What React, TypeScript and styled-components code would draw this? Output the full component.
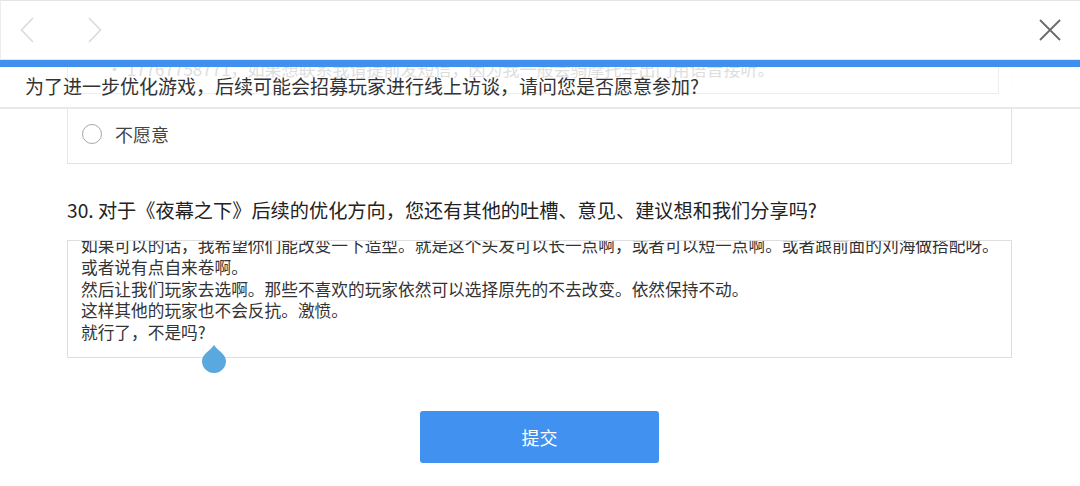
import styled, { createGlobalStyle } from "styled-components";

const GlobalStyle = createGlobalStyle`
  html, body {
    margin: 0;
    padding: 0;
    background: #fff;
  }
  body {
    font-family: "Noto Sans CJK SC", "Noto Sans", sans-serif;
    color: #333;
    width: 1080px;
    height: 486px;
    overflow: hidden;
  }
`;

const Page = styled.div`
  display: flex;
  flex-direction: column;
  width: 1080px;
`;

const TopBar = styled.div`
  display: flex;
  align-items: center;
  height: 58px;
  border-top: 1px solid #e4e4e4;
  border-left: 1px solid #ececec;
  border-bottom: 1px solid #e6e6e6;
  padding: 0 19px 0 19px;
  background: #fff;
`;

const NavButton = styled.button`
  display: flex;
  align-items: center;
  justify-content: center;
  width: 14px;
  height: 26px;
  padding: 0;
  margin-right: ${(p: { $gap?: number }) => p.$gap ?? 0}px;
  border: none;
  background: transparent;
`;

const CloseButton = styled.button`
  margin-left: auto;
  display: flex;
  padding: 0;
  border: none;
  background: transparent;
`;

const Progress = styled.div`
  height: 7px;
  background: #4290ee;
`;

const Sticky = styled.div`
  position: relative;
  height: 40px;
  overflow: hidden;
  border-bottom: 2px solid #e8e8e8;
`;

const Ghost = styled.div`
  margin: 0 68px 0 67px;
  height: 100%;
  border-right: 1px solid #f3f3f3;
  opacity: 0.16;
`;

const GhostInput = styled.div`
  margin-top: -13px;
  margin-right: 12px;
  height: 38px;
  border: 1px solid #999;
  padding-left: 38px;
  font-size: 17px;
  line-height: 28px;
  color: #333;
  white-space: nowrap;
`;

const StickyTitle = styled.div`
  position: absolute;
  left: 25px;
  top: 6px;
  font-size: 19px;
  line-height: 26px;
  color: #333;
  white-space: nowrap;
`;

const Body = styled.div`
  display: flex;
  flex-direction: column;
  padding: 0 68px 0 67px;
`;

const OptionBox = styled.div`
  display: flex;
  align-items: center;
  gap: 13px;
  height: 51px;
  margin-top: -1px;
  padding: 0 0 4px 14px;
  border: 1px solid #e2e2e2;
  border-top: none;
  border-left: 1px solid #e6e6e6;
`;

const Radio = styled.span`
  width: 18px;
  height: 18px;
  border-radius: 50%;
  border: 1.5px solid #a9a9a9;
`;

const OptionLabel = styled.span`
  font-size: 18px;
  color: #444;
`;

const Question = styled.div`
  margin-top: 33px;
  font-size: 19.2px;
  line-height: 26px;
  color: #222;
  white-space: nowrap;
`;

const Answer = styled.div`
  position: relative;
  margin-top: 17px;
  height: 116px;
  border: 1px solid #dedede;
`;

const AnswerScroll = styled.div`
  height: 100%;
  overflow: hidden;
`;

const AnswerText = styled.div`
  margin-top: -6px;
  padding-left: 13px;
  font-size: 16.7px;
  line-height: 21.75px;
  color: #333;
  white-space: nowrap;
`;

const CursorHandle = styled.svg`
  position: absolute;
  left: 133px;
  top: 104px;
`;

const Footer = styled.div`
  display: flex;
  justify-content: center;
  margin-top: 53px;
`;

const Submit = styled.button`
  width: 239px;
  height: 52px;
  border: none;
  border-radius: 3px;
  background: #4191f0;
  color: #fff;
  font-family: "Noto Sans CJK SC", sans-serif;
  font-size: 18px;
`;

const answerLines = [
  "如果可以的话，我希望你们能改变一下造型。就是这个头发可以长一点啊，或者可以短一点啊。或者跟前面的刘海做搭配呀。",
  "或者说有点自来卷啊。",
  "然后让我们玩家去选啊。那些不喜欢的玩家依然可以选择原先的不去改变。依然保持不动。",
  "这样其他的玩家也不会反抗。激愤。",
  "就行了，不是吗?",
];

const App = () => {
  return (
    <Page>
      <GlobalStyle />
      <TopBar>
        <NavButton $gap={54}>
          <svg width="14" height="26" viewBox="0 0 14 26">
            <polyline points="13,1 1.5,13 13,25" fill="none" stroke="#dadada" strokeWidth="1.6" />
          </svg>
        </NavButton>
        <NavButton>
          <svg width="14" height="26" viewBox="0 0 14 26">
            <polyline points="1,1 12.5,13 1,25" fill="none" stroke="#dadada" strokeWidth="1.6" />
          </svg>
        </NavButton>
        <CloseButton>
          <svg width="22" height="22" viewBox="0 0 22 22">
            <path d="M1 1 L21 21 M21 1 L1 21" stroke="#6a6a6a" strokeWidth="1.8" />
          </svg>
        </CloseButton>
      </TopBar>
      <Progress />
      <Sticky>
        <Ghost>
          <GhostInput>• 17767758771，如果想联系我请提前发短信，因为我一般会骑摩托车出门用语音接听。</GhostInput>
        </Ghost>
        <StickyTitle>为了进一步优化游戏，后续可能会招募玩家进行线上访谈，请问您是否愿意参加?</StickyTitle>
      </Sticky>
      <Body>
        <OptionBox>
          <Radio />
          <OptionLabel>不愿意</OptionLabel>
        </OptionBox>
        <Question>30. 对于《夜幕之下》后续的优化方向，您还有其他的吐槽、意见、建议想和我们分享吗?</Question>
        <Answer>
          <AnswerScroll>
            <AnswerText>
              {answerLines.map((l) => (
                <div key={l}>{l}</div>
              ))}
            </AnswerText>
          </AnswerScroll>
          <CursorHandle width="26" height="28" viewBox="0 0 26 28">
            <path d="M13 0 C10 5 1 9 1 16 A12 12 0 0 0 25 16 C25 9 16 5 13 0 Z" fill="#59a9df" />
          </CursorHandle>
        </Answer>
        <Footer>
          <Submit>提交</Submit>
        </Footer>
      </Body>
    </Page>
  );
};

export default App;
